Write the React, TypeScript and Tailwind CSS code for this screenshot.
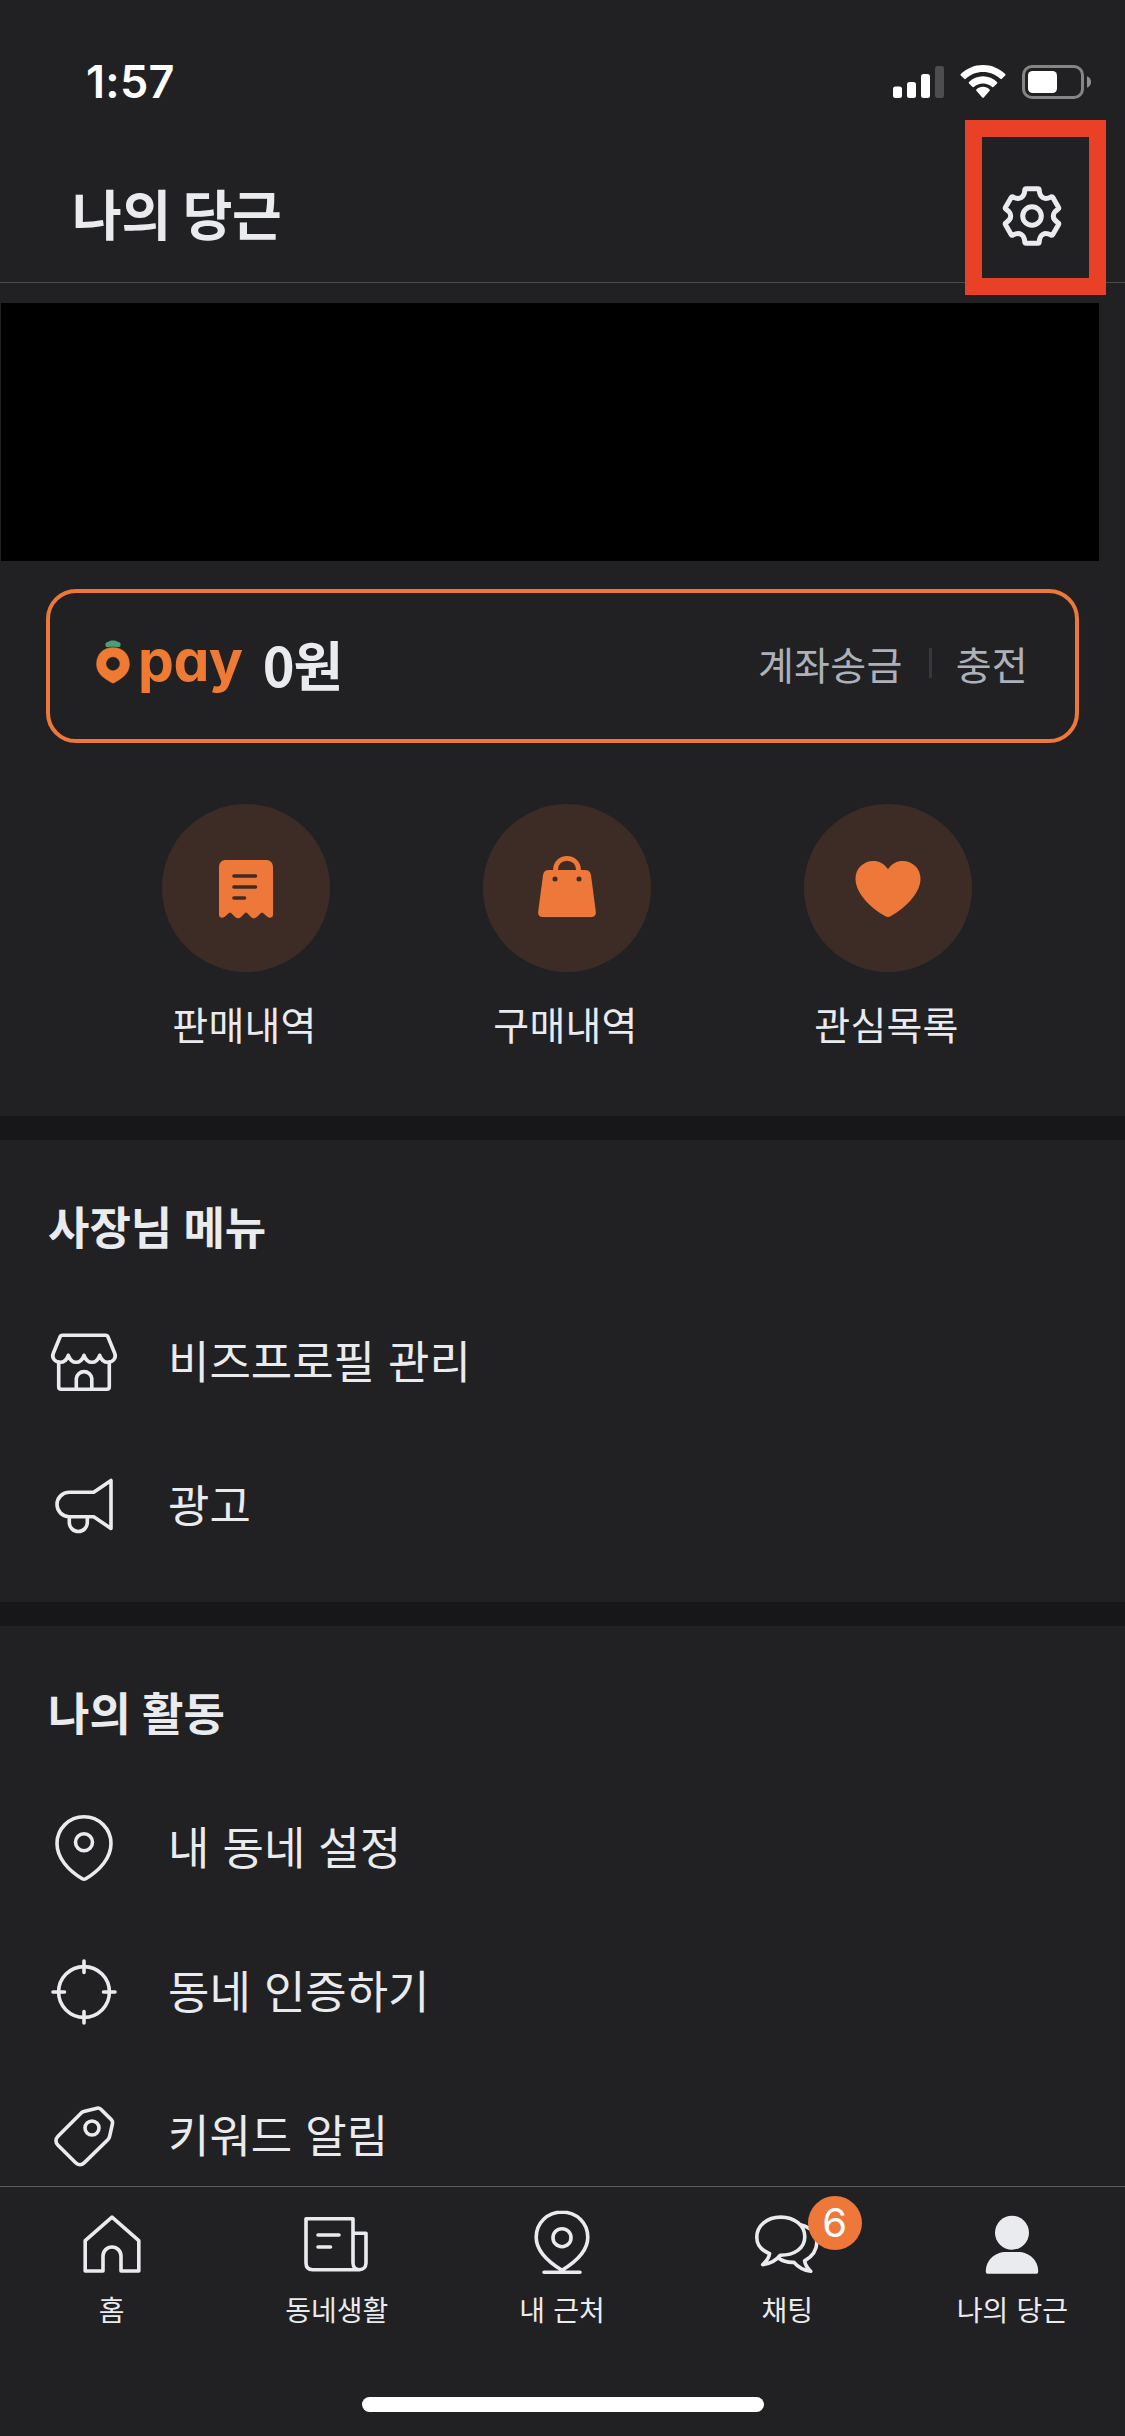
import type { ReactNode } from "react";

const ink = "#eaebee";

// line icons share a 72x72 grid
function LineIcon({ children }: { children: ReactNode }) {
  return (
    <svg
      viewBox="0 0 72 72"
      className="size-[72px] shrink-0"
      fill="none"
      stroke={ink}
      strokeWidth="3.6"
      strokeLinejoin="round"
      strokeLinecap="round"
      aria-hidden
    >
      {children}
    </svg>
  );
}

const StoreIcon = () => (
  <LineIcon>
    <path d="M14.4 9.3h43.2c1.2 0 2 .6 2.4 1.7l6.7 16.3c1.9 4.6-1.6 9-6.7 9-3.700 0-6.600-2-8.300-7-1.800 5-4.400 7-7.800 7s-6.100-2-7.900-7c-1.800 5-4.500 7-7.900 7s-6-2-7.800-7c-1.700 5-4.600 7-8.300 7-5.100 0-8.600-4.400-6.700-9L12 11c.4-1.100 1.200-1.700 2.400-1.700Z" />
    <path d="M10.7 36v24.8c0 1.6 1 2.5 2.5 2.5h45.6c1.5 0 2.5-.9 2.5-2.5V36M28.3 63V52.5a7.8 7.8 0 0 1 15.5 0V63" />
  </LineIcon>
);

const MegaphoneIcon = () => (
  <LineIcon>
    <path d="M21.2 22.3h24.5L63 10.5v48L45.7 46.7H21.2a12.2 12.2 0 0 1 0-24.4ZM21.3 47v5.5a9 9 0 0 0 18 0V47" />
  </LineIcon>
);

const PinIcon = () => (
  <LineIcon>
    <path d="M36 4.8C21 4.8 9 16.8 9 31.5 9 46 20.5 58.5 34.3 66.8c1.2.7 2.2.7 3.4 0C51.5 58.5 63 46 63 31.5 63 16.8 51 4.8 36 4.8Z" />
    <circle cx="36" cy="30.3" r="8.5" />
  </LineIcon>
);

const TargetIcon = () => (
  <LineIcon>
    <circle cx="36" cy="36" r="25.4" />
    <path d="M36 5v11.5M36 55.5V67M5 36h11.5M55.5 36H67" />
  </LineIcon>
);

const TagIcon = () => (
  <LineIcon>
    <path d="M35.8 11.6 49 8.2c1.5-.4 2.7 0 3.8 1.1l10.5 10.3c1.2 1.2 1.5 2.3 1.2 3.9l-3 13.3c-.3 1.2-.8 2.1-1.7 3L36.4 62.6c-2.8 2.7-6.3 2.7-9 0L10 45.2c-2.7-2.7-2.7-6.2 0-8.9l23-23.1c.8-.8 1.7-1.3 2.8-1.6Z" />
    <circle cx="44" cy="28" r="7" />
  </LineIcon>
);

const HomeIcon = () => (
  <LineIcon>
    <path d="M36 8.2 62.8 31.7V62H45V47a9 9 0 0 0-18 0v15H9.2V31.7Z" />
  </LineIcon>
);

const NewsIcon = () => (
  <LineIcon>
    <path d="M5 9.7h47V54c0 8.900 13 8.900 13 0V24.300H52M5 9.7V54c0 4.400 2.300 6.700 6.700 6.700h46.800M17 26h21M17 38h12.500" />
  </LineIcon>
);

const NearbyIcon = () => (
  <LineIcon>
    <path d="M36 3C21.5 3 10.2 14 10.2 28.3 10.2 41.5 21.5 52.5 36 61.3c14.5-8.8 25.8-19.8 25.8-33C61.8 14 50.5 3 36 3ZM18 63.2h36" />
    <circle cx="36" cy="28.7" r="9" />
  </LineIcon>
);

const ChatIcon = () => (
  <LineIcon>
    <path d="M29.8 8.1C16 8.1 5.8 16.5 5.8 28.3c0 7 4.2 13 12.800 16.300-.6 4.200-2.900 7.500-6.900 11 7.200-.8 13.200-3.600 17.600-9.400 14.100 0 24.500-6.800 24.500-18.400C53.800 16.5 43.6 8.1 29.8 8.100Z" />
    <path d="M49.5 15.8c9.800 2.500 16.300 8.400 16.300 17.600 0 8-4.300 13.800-12.200 18.500.7 4.300 2.800 7.500 6.200 10.400-6.700-.8-12.300-3.600-16.800-8.900-6.500.2-11.500-1.200-15.500-4.400" />
  </LineIcon>
);

const PersonIcon = () => (
  <svg viewBox="0 0 72 72" className="size-[72px] shrink-0" fill={ink} aria-hidden>
    <circle cx="36" cy="23.7" r="17" />
    <path d="M9.8 62.5C9.8 51 19 43 30 43h12C53 43 62.2 51 62.2 62.5c0 1.5-.8 2.3-2.3 2.3H12.1c-1.500 0-2.300-.8-2.300-2.300Z" />
  </svg>
);

const GearIcon = () => (
  <svg
    viewBox="-30 -30 60 60"
    className="size-[60px]"
    fill="none"
    stroke={ink}
    strokeWidth="5"
    strokeLinejoin="round"
    aria-hidden
  >
    <path d="M-6 -27.2H6Q7.1 -27.2 7.2 -26C7.8 -18.3 12.3 -15.7 19.1 -19.1Q20.2 -19.6 20.8 -18.6L26.6 -8.5Q27.1 -7.6 26.1 -6.9C19.7 -2.8 19.7 2.8 26.1 6.9Q27.1 7.6 26.6 8.5L20.8 18.6Q20.2 19.6 19.1 19.1C12.3 15.7 7.8 18.3 7.2 26Q7.1 27.2 6 27.2H-6Q-7.1 27.2 -7.2 26C-7.8 18.3 -12.3 15.7 -19.1 19.1Q-20.2 19.6 -20.8 18.6L-26.6 8.5Q-27.1 7.6 -26.1 6.9C-19.7 2.8 -19.7 -2.8 -26.1 -6.9Q-27.1 -7.6 -26.6 -8.5L-20.8 -18.6Q-20.2 -19.6 -19.1 -19.1C-12.3 -15.7 -7.8 -18.3 -7.2 -26Q-7.1 -27.2 -6 -27.2Z" />
    <circle r="9.3" />
  </svg>
);

const ReceiptIcon = () => (
  <svg viewBox="0 0 72 72" className="size-[72px]" aria-hidden>
    <path
      fill="#ed7839"
      d="M16.5 8h39c5 0 7.500 2.500 7.500 7.500v47c0 3.300-3.500 4.300-5.700 2.300l-4.200-3.800q-1.100-.9-2.200 0l-3.800 3.800c-2.200 2-4.200 2-6.400 0L37.100 61q-1.100-.9-2.200 0l-3.600 3.800c-2.200 2-4.200 2-6.400 0L21.100 61q-1.100-.9-2.200 0l-4.200 3.800c-2.200 2-5.700 1-5.700-2.300v-47c0-5 2.500-7.500 7.500-7.500Z"
    />
    <path stroke="#3d2c25" strokeWidth="3.6" strokeLinecap="round" d="M24 24h21.500M24 35h21.500M24 46h10.500" />
  </svg>
);

const BagIcon = () => (
  <svg viewBox="0 0 72 72" className="size-[72px]" aria-hidden>
    <path
      fill="#ed7839"
      d="M18 18h36c3.5 0 5.6 1.9 6 5.3l4.8 36.2c.4 3.7-1.3 5.5-5 5.5H12.2c-3.7 0-5.4-1.8-5-5.5L12 23.3c.4-3.4 2.5-5.300 6-5.300Z"
    />
    <path fill="none" stroke="#ed7839" strokeWidth="4.8" d="M24.4 20v-1.5C24.4 11 29.5 6.4 36 6.4S47.6 11 47.6 18.5V20" />
    <circle cx="24" cy="27" r="2.5" fill="#3d2c25" />
    <circle cx="48" cy="27" r="2.5" fill="#3d2c25" />
  </svg>
);

const HeartIcon = () => (
  <svg viewBox="0 0 72 72" className="size-[72px]" aria-hidden>
    <path
      fill="#ed7839"
      d="M36 17.2C32 11.5 27 9 21.5 9 11.5 9 3.5 16.5 3.5 26.5c0 14.500 14 28.500 29.500 37.500 2.200 1.300 3.800 1.300 6 0 15.500-9 29.500-23 29.500-37.500C68.500 16.500 60.500 9 50.500 9 45 9 40 11.500 36 17.200Z"
    />
  </svg>
);

const CarrotLogo = () => (
  <svg viewBox="0 0 34 44" className="h-[44px] w-[34px]" aria-hidden>
    <path fill="#4a9f78" d="M10.500 7C8.500 5.500 9 2 12.500 1.800 14-.1 20-.1 21.500 1.800 25 2 25.500 5.500 23.500 7Z" />
    <path
      fill="#ef7a33"
      stroke="#212124"
      strokeWidth=".6"
      fillRule="evenodd"
      d="M17 7C7.3 7 0 14.3 0 24c0 7.5 4.5 12 10.7 16.2l4.6 2.8c1.2.8 2.2.8 3.4 0l4.600-2.800C29.500 36 34 31.500 34 24 34 14.300 26.700 7 17 7Zm0 10.200a6.500 6.500 0 1 1 0 13 6.500 6.500 0 0 1 0-13Z"
    />
  </svg>
);

const StatusIcons = () => (
  <svg viewBox="0 0 200 36" className="h-[36px] w-[200px]" aria-hidden>
    <g fill="#fff">
      <rect x="1" y="22.6" width="9" height="11.4" rx="2.5" />
      <rect x="15" y="18" width="9" height="16" rx="2.5" />
      <rect x="29" y="10" width="9" height="24" rx="2.5" />
      <rect x="43" y="2" width="9" height="32" rx="2.5" opacity=".2" />
      <path d="M91 22.8c2.5 0 4.9 1 6.6 2.6.4.4.4.9 0 1.3L91.8 33.4c-.5.6-1.1.6-1.6 0l-5.8-6.7c-.4-.4-.4-.9 0-1.3 1.7-1.6 4.1-2.6 6.6-2.6Z" />
      <path d="M91 12.3c5.4 0 10.3 2.2 14 5.7.5.5.5 1 0 1.5l-3.3 3.3c-.5.5-1 .5-1.5.1-2.5-2.2-5.7-3.5-9.2-3.5s-6.7 1.3-9.2 3.5c-.5.4-1 .4-1.5-.1L77 19.5c-.5-.5-.5-1 0-1.5 3.7-3.5 8.6-5.7 14-5.7Z" />
      <path d="M91 1c8.6 0 16.3 3.4 22.2 8.9.5.5.5 1 0 1.5l-3.4 3.4c-.5.5-1 .5-1.5 0C103.7 10.6 97.7 8 91 8s-12.7 2.6-17.3 6.8c-.5.5-1 .5-1.5 0l-3.4-3.4c-.5-.5-.5-1 0-1.5C74.7 4.4 82.4 1 91 1Z" />
      <rect x="136" y="7" width="29" height="22" rx="4.5" />
      <path d="M195 12.3c2.6 1 4 3.2 4 5.7s-1.4 4.7-4 5.7Z" opacity=".5" />
    </g>
    <rect x="131.5" y="2.5" width="59" height="31" rx="8.5" fill="none" stroke="#fff" strokeWidth="3" opacity=".45" />
  </svg>
);

const shortcuts = [
  { label: "판매내역", icon: <ReceiptIcon /> },
  { label: "구매내역", icon: <BagIcon /> },
  { label: "관심목록", icon: <HeartIcon /> },
];

const sections = [
  {
    title: "사장님 메뉴",
    items: [
      { label: "비즈프로필 관리", icon: <StoreIcon /> },
      { label: "광고", icon: <MegaphoneIcon /> },
    ],
  },
  {
    title: "나의 활동",
    items: [
      { label: "내 동네 설정", icon: <PinIcon /> },
      { label: "동네 인증하기", icon: <TargetIcon /> },
      { label: "키워드 알림", icon: <TagIcon /> },
    ],
  },
];

const tabs = [
  { label: "홈", icon: <HomeIcon /> },
  { label: "동네생활", icon: <NewsIcon /> },
  { label: "내 근처", icon: <NearbyIcon /> },
  { label: "채팅", icon: <ChatIcon />, badge: 6 },
  { label: "나의 당근", icon: <PersonIcon /> },
];

export default function App() {
  return (
    <div className="relative flex h-[2436px] w-[1125px] flex-col overflow-hidden bg-[#212124] font-['Noto_Sans_CJK_KR',sans-serif] text-[#eaebee]">
      <div className="flex h-[149px] shrink-0 items-start justify-between pt-[64px] pr-[33px] pl-[86px]">
        <span className="font-['Inter',sans-serif] text-[45px] leading-[36px] font-semibold tracking-[0.3px] text-white">1:57</span>
        <StatusIcons />
      </div>

      <header className="flex h-[134px] shrink-0 items-center justify-between border-b border-[#4b4b4d] pr-[63px] pl-[72px]">
        <h1 className="pb-[6px] text-[54px] leading-[72px] font-bold tracking-[-0.3px]">나의 당근</h1>
        <button aria-label="설정">
          <GearIcon />
        </button>
      </header>

      <main className="flex min-h-0 flex-1 flex-col overflow-hidden">
        <div className="mt-[20px] ml-px h-[258px] w-[1098px] shrink-0 bg-black" />

        <div className="mx-[46px] mt-[28px] flex h-[154px] shrink-0 items-center rounded-[30px] border-4 border-[#ed7839] pr-[47px] pl-[46px]">
          <div className="flex items-center pb-[9px]">
            <CarrotLogo />
            <span className="ml-[8px] pb-[2px] font-['Inter',sans-serif] text-[57px] leading-[60px] font-bold tracking-[-0.5px] text-[#ef7a33] [font-feature-settings:'cv11']">
              pay
            </span>
          </div>
          <strong className="ml-[20px] pb-[5px] text-[54px] leading-[72px] font-bold tracking-[-1px]">0원</strong>
          <div className="ml-auto flex items-center pb-[6px] text-[39px] leading-[54px] tracking-[0.3px] text-[#adb1ba]">
            <span>계좌송금</span>
            <span className="mr-[24px] ml-[26px] h-[30px] w-[3px] bg-[#34373d]" />
            <span>충전</span>
          </div>
        </div>

        <div className="flex h-[373px] shrink-0 justify-center pt-[61px] pl-[8px]">
          {shortcuts.map((s) => (
            <div key={s.label} className="flex w-[321px] flex-col items-center">
              <div className="flex size-[168px] items-center justify-center rounded-full bg-[#3d2c25]">{s.icon}</div>
              <span className="mt-[24px] pr-[2px] text-[39px] leading-[54px] tracking-[0.2px]">{s.label}</span>
            </div>
          ))}
        </div>

        {sections.map((sec) => (
          <section key={sec.title} className="shrink-0 border-t-[24px] border-[#171719] pb-[24px]">
            <h2 className="flex h-[150px] items-center pt-[22px] pl-[48px] text-[45px] font-bold [word-spacing:1px]">
              {sec.title}
            </h2>
            {sec.items.map((it) => (
              <div key={it.label} className="flex h-[144px] items-center gap-[48px] pl-[48px]">
                {it.icon}
                <span className="pb-[4px] text-[45px] leading-[60px] [word-spacing:3px]">{it.label}</span>
              </div>
            ))}
          </section>
        ))}
      </main>

      <nav className="flex h-[250px] shrink-0 flex-col justify-between border-t border-[#5c5c5e] pt-[22px] pb-[24px]">
        <div className="-ml-px grid grid-cols-5">
          {tabs.map((t) => (
            <div key={t.label} className="relative flex flex-col items-center">
              {t.icon}
              {t.badge && (
                <span className="absolute top-[-13px] left-[133px] flex size-[54px] items-center justify-center rounded-full bg-[#ed7839] font-['Inter',sans-serif] text-[40px] leading-none text-white">
                  {t.badge}
                </span>
              )}
              <span className="mt-[8px] text-[28px] leading-[40px] [word-spacing:2px]">{t.label}</span>
            </div>
          ))}
        </div>
        <div className="mx-auto h-[15px] w-[402px] rounded-full bg-white" />
      </nav>

      {/* highlight around the settings button */}
      <div className="pointer-events-none absolute top-[120px] left-[965px] h-[175px] w-[141px] border-[17px] border-[#e94127]" />
    </div>
  );
}
